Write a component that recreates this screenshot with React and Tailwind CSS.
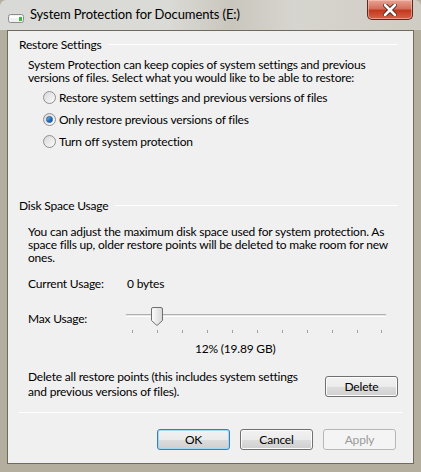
import React from 'react';

const font = { fontFamily: 'Lato, "Noto Sans", sans-serif' };

const Radio = ({ checked, label }) => (
  <div className="flex items-center h-[22px] pl-[15px]">
    <span className="relative w-[13px] h-[13px] rounded-full border border-[#8f8f8f] bg-gradient-to-br from-[#d8d8d8] to-[#fbfbfb] flex items-center justify-center">
      {checked && (
        <span className="w-[7px] h-[7px] rounded-full bg-gradient-to-br from-[#8dc6f0] via-[#2a7bc4] to-[#0d4e94] border border-[#1d5c9a]" />
      )}
    </span>
    <span className="ml-[3px]">{label}</span>
  </div>
);

const GroupHeading = ({ children }) => (
  <div className="flex items-center pl-[11px] pr-[15px] h-[15px]">
    <span>{children}</span>
    <span className="flex-1 ml-[7px] h-px bg-[#a8a8a8] border-b border-white" />
  </div>
);

const Button = ({ children, variant }) => {
  if (variant === 'disabled') {
    return (
      <div className="w-[73px] h-[21px] rounded-[3px] border border-[#b5b8bb] bg-[#f4f4f4] text-[#9a9a9a] flex items-center justify-center">
        {children}
      </div>
    );
  }
  const ring = variant === 'default'
    ? 'border-[#3c7fb1] shadow-[inset_0_0_0_1px_#9fd9f4]'
    : 'border-[#707070] shadow-[inset_0_0_0_1px_#fcfcfc]';
  return (
    <div className={`w-[73px] h-[21px] rounded-[3px] border ${ring} bg-[linear-gradient(#f2f2f2_0%,#ebebeb_50%,#dddddd_51%,#cfcfcf_100%)] flex items-center justify-center text-black`}>
      {children}
    </div>
  );
};

const ticks = [6, 31, 56, 81, 106, 131, 156, 181, 206, 231, 255];

const Slider = () => (
  <div className="relative w-[260px] h-[30px]">
    <div className="absolute left-0 right-0 top-[10px] h-[3px] border-t border-[#b0b0b0] border-b border-b-white bg-[#e6e6e6]" />
    {ticks.map((x) => (
      <div key={x} className="absolute top-[26px] w-px h-[3px] bg-[#a0a0a0]" style={{ left: x }} />
    ))}
    <svg className="absolute left-[25px] top-[3px]" width="12" height="19" viewBox="0 0 12 19">
      <defs>
        <linearGradient id="th" x1="0" y1="0" x2="1" y2="0">
          <stop offset="0" stopColor="#fdfdfd" />
          <stop offset="1" stopColor="#d6d6d6" />
        </linearGradient>
      </defs>
      <path d="M2 0.5 H10 Q11.5 0.5 11.5 2 V13.5 L6 18.5 L0.5 13.5 V2 Q0.5 0.5 2 0.5 Z" fill="url(#th)" stroke="#707070" />
    </svg>
  </div>
);

export default function App() {
  return (
    <div className="w-[421px] h-[472px] flex flex-col bg-[#b4ae9e] text-[12px] tracking-[-0.2px] text-black leading-[15px] whitespace-nowrap" style={font}>
      {/* title bar */}
      <div className="relative h-[30px] flex items-start bg-[linear-gradient(90deg,#d9d9d7_0%,#dadad6_40%,#c9c6bd_55%,#d7d5cf_70%,#cfccc3_100%)] rounded-t-[6px]">
        <svg className="ml-[8px] mt-[14px]" width="16" height="9" viewBox="0 0 16 9">
          <rect x="0.5" y="0.5" width="15" height="8" rx="2" fill="#f1f1f1" stroke="#8c8c8c" />
          <rect x="2" y="2" width="9" height="2" fill="#ffffff" />
          <rect x="11" y="3" width="3" height="4" fill="#3cb83c" />
        </svg>
        <span className="ml-[6px] mt-[7px] text-[13px] tracking-[-0.1px]">System Protection for Documents (E:)</span>
        <div className="absolute right-[8px] top-0 w-[46px] h-[20px] rounded-b-[5px] border border-t-0 border-[#5a2a22] bg-[linear-gradient(#e8a494_0%,#d4705c_45%,#c2391f_55%,#d8624a_100%)] flex items-center justify-center shadow-[inset_0_0_0_1px_rgba(255,210,200,0.5)]">
          <svg width="14" height="12" viewBox="0 0 14 12">
            <path d="M2 1 L12 11 M12 1 L2 11" stroke="#4a2420" strokeWidth="4.5" strokeLinecap="round" />
            <path d="M2 1 L12 11 M12 1 L2 11" stroke="#ffffff" strokeWidth="2.6" strokeLinecap="round" />
          </svg>
        </div>
      </div>

      {/* body with frame */}
      <div className="flex-1 flex px-[7px] pb-[8px]">
        <div className="flex-1 flex flex-col bg-[#f0f0f0] border border-[#6f6a5c]">
          <div className="pt-[6px]">
            <GroupHeading>Restore Settings</GroupHeading>
          </div>
          <div className="pl-[20px] mt-[6px] leading-[13px]">
            <p>System Protection can keep copies of system settings and previous</p>
            <p>versions of files. Select what you would like to be able to restore:</p>
          </div>
          <div className="pl-[20px] mt-[2px]">
            <Radio label="Restore system settings and previous versions of files" />
            <Radio checked label="Only restore previous versions of files" />
            <Radio label="Turn off system protection" />
          </div>

          <div className="mt-[46px]">
            <GroupHeading>Disk Space Usage</GroupHeading>
          </div>
          <div className="pl-[20px] mt-[12px] leading-[13px]">
            <p>You can adjust the maximum disk space used for system protection. As</p>
            <p>space fills up, older restore points will be deleted to make room for new</p>
            <p>ones.</p>
          </div>
          <div className="pl-[20px] mt-[12px] flex">
            <span className="w-[99px]">Current Usage:</span>
            <span>0 bytes</span>
          </div>
          <div className="pl-[20px] mt-[13px] flex items-start">
            <span className="w-[98px] mt-[7px]">Max Usage:</span>
            <Slider />
          </div>
          <div className="pl-[187px] mt-[7px]">12% (19.89 GB)</div>
          <div className="pl-[20px] pr-[15px] mt-[13px] flex items-start justify-between">
            <p>
              Delete all restore points (this includes system settings
              <br />
              and previous versions of files).
            </p>
            <div className="mt-[7px]">
              <Button>Delete</Button>
            </div>
          </div>
          <div className="mx-[11px] mt-[13px] h-px bg-[#a0a0a0] border-b border-white" />
          <div className="flex justify-end gap-[10px] pr-[17px] mt-[16px]">
            <Button variant="default">OK</Button>
            <Button>Cancel</Button>
            <Button variant="disabled">Apply</Button>
          </div>
        </div>
      </div>
    </div>
  );
}
